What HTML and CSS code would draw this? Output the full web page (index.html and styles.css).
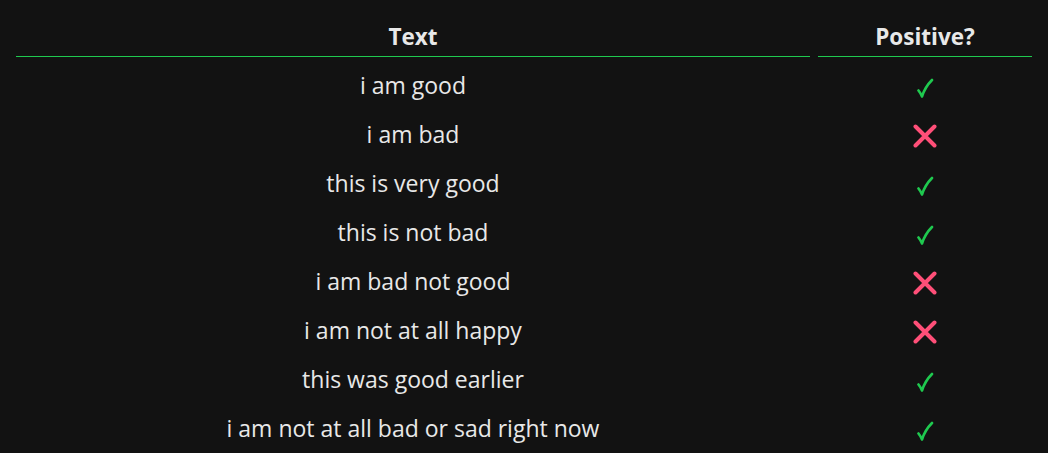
FILE: index.html
```html
<!DOCTYPE html>
<html>
<head>
<meta charset="utf-8">
<link rel="stylesheet" href="styles.css">
</head>
<body>
<table class="results">
  <thead>
    <tr><th class="col-text">Text</th><th class="col-pos">Positive?</th></tr>
  </thead>
  <tbody>
    <tr><td>i am good</td><td><svg class="yes" viewBox="0 0 18 20"><path d="M2.5 12.5 Q4.5 15 6 18.5 Q9 9 16 2"/></svg></td></tr>
    <tr><td>i am bad</td><td><svg class="no" viewBox="0 0 24 24"><path d="M2.5 2.5L21.5 21.5M21.5 2.5L2.5 21.5"/></svg></td></tr>
    <tr><td>this is very good</td><td><svg class="yes" viewBox="0 0 18 20"><path d="M2.5 12.5 Q4.5 15 6 18.5 Q9 9 16 2"/></svg></td></tr>
    <tr><td>this is not bad</td><td><svg class="yes" viewBox="0 0 18 20"><path d="M2.5 12.5 Q4.5 15 6 18.5 Q9 9 16 2"/></svg></td></tr>
    <tr><td>i am bad not good</td><td><svg class="no" viewBox="0 0 24 24"><path d="M2.5 2.5L21.5 21.5M21.5 2.5L2.5 21.5"/></svg></td></tr>
    <tr><td>i am not at all happy</td><td><svg class="no" viewBox="0 0 24 24"><path d="M2.5 2.5L21.5 21.5M21.5 2.5L2.5 21.5"/></svg></td></tr>
    <tr><td>this was good earlier</td><td><svg class="yes" viewBox="0 0 18 20"><path d="M2.5 12.5 Q4.5 15 6 18.5 Q9 9 16 2"/></svg></td></tr>
    <tr><td>i am not at all bad or sad right now</td><td><svg class="yes" viewBox="0 0 18 20"><path d="M2.5 12.5 Q4.5 15 6 18.5 Q9 9 16 2"/></svg></td></tr>
  </tbody>
</table>
</body>
</html>
```
FILE: styles.css
```css
html, body {
  background: #121212;
}
body {
  margin: 8px;
  font-family: "Open Sans", "Noto Sans", sans-serif;
  color: #e8e8e8;
}
.results {
  width: 100%;
  border-collapse: separate;
  border-spacing: 8px;
}
.results th {
  font-weight: 700;
  font-size: 22.5px;
  height: 40px;
  padding: 0;
  border-bottom: 1px solid #1fc94f;
  vertical-align: middle;
  line-height: 1.2;
}
.col-pos { width: 214px; }
.results td {
  text-align: center;
  font-size: 23px;
  height: 41px;
  padding: 0;
  vertical-align: middle;
  line-height: 1.2;
}
.yes {
  width: 18px;
  height: 20px;
  vertical-align: middle;
}
.yes path {
  stroke: #1fc94f;
  stroke-width: 2.6;
  stroke-linecap: round;
  stroke-linejoin: round;
  fill: none;
}
.no {
  width: 24px;
  height: 24px;
  vertical-align: middle;
}
.no path {
  stroke: #ff4f78;
  stroke-width: 4;
  stroke-linecap: round;
  fill: none;
}
```
